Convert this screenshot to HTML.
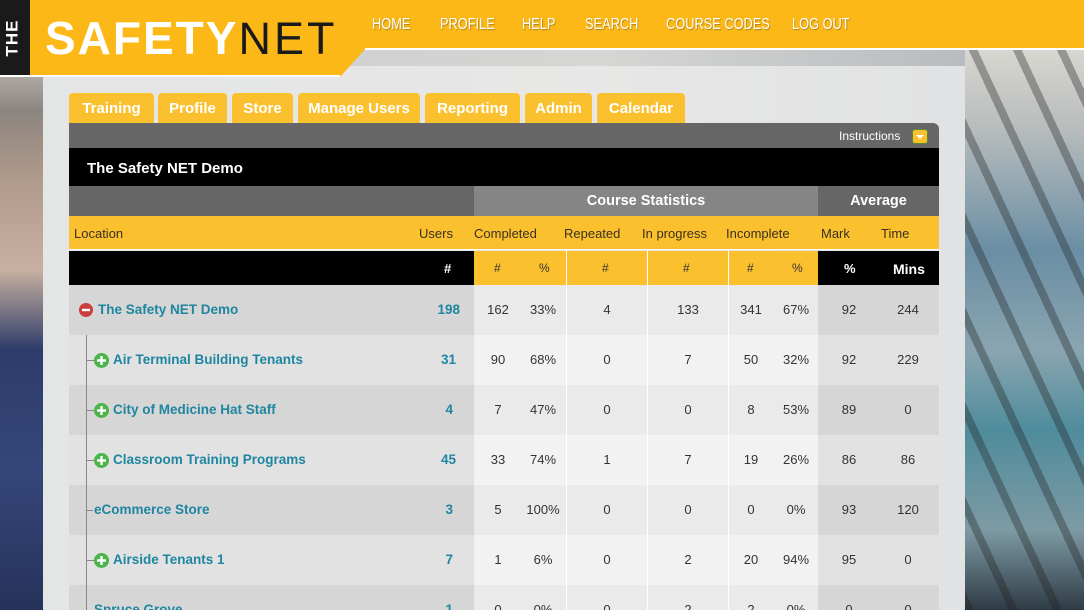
<!DOCTYPE html>
<html><head><meta charset="utf-8">
<style>
*{margin:0;padding:0;box-sizing:border-box}
html,body{width:1084px;height:610px;overflow:hidden}
body{position:relative;font-family:"Liberation Sans","DejaVu Sans",sans-serif;
background:linear-gradient(90deg,#3a3f4a 0,#6b6f75 43px,#c9cbcc 43px,#d6d6d4 600px,#b8bcc0 965px,#5d6f7d 990px,#8fa8b5 1020px,#4a5c68 1084px);}
.lstrip{position:absolute;left:0;top:50px;width:43px;height:560px;background:linear-gradient(180deg,#c9c4bd 0,#8c8580 60px,#b09a8a 130px,#c8b0a0 220px,#2d3c6a 300px,#35467a 420px,#26325a 560px)}
.rstrip{position:absolute;left:965px;top:50px;width:119px;height:560px;background:
repeating-linear-gradient(65deg,rgba(30,30,30,.35) 0 8px,transparent 8px 40px),
linear-gradient(180deg,#d8d6d0 0,#b7bcbc 80px,#6a8ea4 200px,#8aa5b0 300px,#4f8c9c 380px,#7d9aa4 480px,#2f3b45 560px)}
.panel{position:absolute;left:43px;top:66px;width:922px;height:544px;background:rgba(235,235,235,.8)}
.hdr{position:absolute;left:0;top:0;width:1084px;height:50px;background:#fbb817;border-bottom:2px solid #fff}
.logo{position:absolute;left:0;top:0;width:365px;height:77px;background:#fbb817;clip-path:polygon(0 0,100% 0,100% 64%,340px 100%,0 100%)}
.logoline{position:absolute;left:0;top:75px;width:340px;height:2px;background:#fff}
.the{position:absolute;left:0;top:0;width:30px;height:75px;background:#1a1a1a}
.the span{position:absolute;left:-6px;top:28px;color:#fff;font-weight:bold;font-size:17px;transform:rotate(-90deg);letter-spacing:1px}
.brand{position:absolute;left:45px;top:10px;font-size:46px;line-height:56px;color:#fff;font-weight:bold;letter-spacing:2px;white-space:nowrap}
.brand b{font-weight:normal;color:#1a1a1a;letter-spacing:3px;font-size:45px}
.nav a{position:absolute;top:16px;color:#fff;font-size:16px;text-decoration:none;transform:scaleX(.8);transform-origin:left;white-space:nowrap;text-shadow:1px 1px 1px rgba(0,0,0,.3)}
.tab{position:absolute;top:93px;height:30px;background:#fbc02d;border-radius:4px 4px 0 0;color:#fff;font-weight:bold;font-size:15px;line-height:31px;text-align:center}
.abs{position:absolute}
.t{position:absolute;font-size:13px;color:#333}
.ctr{text-align:center}
.hl{position:absolute;left:86px;width:9px;height:1px;background:#888}.pl{position:absolute;left:94px}.nm{position:absolute;color:#1e86a0;font-weight:bold;font-size:13.5px}.u{position:absolute;color:#1e86a0;font-weight:bold;font-size:13.5px;width:40px;text-align:right;left:420px}.n{position:absolute;font-size:13px;color:#333;text-align:center;width:50px}
</style></head><body>
<div class="lstrip"></div><div class="rstrip"></div>
<div class="panel"></div>
<div class="hdr"></div>
<div class="logo"></div><div class="logoline"></div>
<div class="the"><span>THE</span></div>
<div class="brand">SAFETY<b>NET</b></div>
<div class="nav">
<a style="left:372px">HOME</a><a style="left:440px">PROFILE</a><a style="left:522px">HELP</a><a style="left:585px">SEARCH</a><a style="left:666px">COURSE CODES</a><a style="left:792px">LOG OUT</a>
</div>
<div class="tab" style="left:69px;width:85px">Training</div>
<div class="tab" style="left:158px;width:69px">Profile</div>
<div class="tab" style="left:232px;width:61px">Store</div>
<div class="tab" style="left:298px;width:122px">Manage Users</div>
<div class="tab" style="left:425px;width:95px">Reporting</div>
<div class="tab" style="left:525px;width:67px">Admin</div>
<div class="tab" style="left:597px;width:88px">Calendar</div>

<div class="abs" style="left:69px;top:123px;width:870px;height:25px;background:#666;border-radius:0 6px 0 0"></div>
<div class="t" style="left:839px;top:129px;color:#fff;font-size:12px">Instructions</div>
<div class="abs" style="left:912px;top:129px;width:16px;height:15px;background:#fbc02d;border:1px solid #5a8a3a;border-radius:3px"></div>
<div class="abs" style="left:916px;top:135px;width:0;height:0;border-left:4px solid transparent;border-right:4px solid transparent;border-top:4px solid #fff"></div>
<div class="abs" style="left:69px;top:148px;width:870px;height:38px;background:#000"></div>
<div class="t" style="left:87px;top:160px;color:#fff;font-weight:bold;font-size:15px">The Safety NET Demo</div>
<div class="abs" style="left:69px;top:186px;width:405px;height:30px;background:#666"></div>
<div class="abs" style="left:474px;top:186px;width:344px;height:30px;background:#858585"></div>
<div class="abs" style="left:818px;top:186px;width:121px;height:30px;background:#666"></div>
<div class="t ctr" style="left:474px;width:344px;top:193px;color:#fff;font-weight:bold;font-size:14.5px">Course Statistics</div>
<div class="t ctr" style="left:818px;width:121px;top:193px;color:#fff;font-weight:bold;font-size:14.5px">Average</div>
<div class="abs" style="left:69px;top:216px;width:870px;height:34px;background:#fbc02d;border-bottom:1px solid #fff"></div>
<div class="t" style="left:74px;top:226px;color:#3a3020">Location</div>
<div class="t" style="left:419px;top:226px;color:#3a3020">Users</div>
<div class="t" style="left:474px;top:226px;color:#3a3020">Completed</div>
<div class="t" style="left:564px;top:226px;color:#3a3020">Repeated</div>
<div class="t" style="left:642px;top:226px;color:#3a3020">In progress</div>
<div class="t" style="left:726px;top:226px;color:#3a3020">Incomplete</div>
<div class="t" style="left:821px;top:226px;color:#3a3020">Mark</div>
<div class="t" style="left:881px;top:226px;color:#3a3020">Time</div>
<div class="abs" style="left:69px;top:251px;width:405px;height:34px;background:#000"></div>
<div class="abs" style="left:474px;top:251px;width:344px;height:34px;background:#fbc02d"></div>
<div class="abs" style="left:818px;top:251px;width:121px;height:34px;background:#000"></div>
<div class="t" style="left:444px;top:261px;color:#fff;font-weight:bold">#</div>
<div class="t" style="left:494px;top:261px;font-size:12px">#</div><div class="t" style="left:539px;top:261px;font-size:12px">%</div>
<div class="t" style="left:602px;top:261px;font-size:12px">#</div>
<div class="t" style="left:683px;top:261px;font-size:12px">#</div>
<div class="t" style="left:747px;top:261px;font-size:12px">#</div><div class="t" style="left:792px;top:261px;font-size:12px">%</div>
<div class="t" style="left:844px;top:261px;color:#fff;font-weight:bold">%</div>
<div class="t" style="left:893px;top:261px;color:#fff;font-weight:bold;font-size:14px">Mins</div>

<div class="abs" style="left:69px;top:285px;width:870px;height:325px;overflow:hidden">
<div class="abs" style="left:0;top:0;width:405px;height:50px;background:#d6d6d6"></div><div class="abs" style="left:405px;top:0;width:344px;height:50px;background:#eaeaea"></div><div class="abs" style="left:749px;top:0;width:121px;height:50px;background:#d6d6d6"></div>
<div class="abs" style="left:0;top:50px;width:405px;height:50px;background:#e2e2e2"></div><div class="abs" style="left:405px;top:50px;width:344px;height:50px;background:#f2f2f2"></div><div class="abs" style="left:749px;top:50px;width:121px;height:50px;background:#e2e2e2"></div>
<div class="abs" style="left:0;top:100px;width:405px;height:50px;background:#d6d6d6"></div><div class="abs" style="left:405px;top:100px;width:344px;height:50px;background:#eaeaea"></div><div class="abs" style="left:749px;top:100px;width:121px;height:50px;background:#d6d6d6"></div>
<div class="abs" style="left:0;top:150px;width:405px;height:50px;background:#e2e2e2"></div><div class="abs" style="left:405px;top:150px;width:344px;height:50px;background:#f2f2f2"></div><div class="abs" style="left:749px;top:150px;width:121px;height:50px;background:#e2e2e2"></div>
<div class="abs" style="left:0;top:200px;width:405px;height:50px;background:#d6d6d6"></div><div class="abs" style="left:405px;top:200px;width:344px;height:50px;background:#eaeaea"></div><div class="abs" style="left:749px;top:200px;width:121px;height:50px;background:#d6d6d6"></div>
<div class="abs" style="left:0;top:250px;width:405px;height:50px;background:#e2e2e2"></div><div class="abs" style="left:405px;top:250px;width:344px;height:50px;background:#f2f2f2"></div><div class="abs" style="left:749px;top:250px;width:121px;height:50px;background:#e2e2e2"></div>
<div class="abs" style="left:0;top:300px;width:405px;height:25px;background:#d6d6d6"></div><div class="abs" style="left:405px;top:300px;width:344px;height:25px;background:#eaeaea"></div><div class="abs" style="left:749px;top:300px;width:121px;height:25px;background:#d6d6d6"></div>
<div class="abs" style="left:497px;top:0;width:1px;height:325px;background:#fff"></div>
<div class="abs" style="left:578px;top:0;width:1px;height:325px;background:#fff"></div>
<div class="abs" style="left:659px;top:0;width:1px;height:325px;background:#fff"></div>
<div class="abs" style="left:17px;top:50px;width:1px;height:275px;background:#888"></div>
</div>
<div class="abs" style="left:566px;top:251px;width:1px;height:34px;background:#fff"></div>
<div class="abs" style="left:647px;top:251px;width:1px;height:34px;background:#fff"></div>
<div class="abs" style="left:728px;top:251px;width:1px;height:34px;background:#fff"></div>

<svg class="abs" style="left:79px;top:303px" width="14" height="14"><circle cx="7" cy="7" r="7" fill="#c9403f"/><rect x="3" y="5.8" width="8" height="2.4" fill="#fff"/></svg>
<div class="t" style="left:98px;top:302px;color:#1e86a0;font-weight:bold;font-size:13.5px">The Safety NET Demo</div>

<div class="u" style="top:302px">198</div>
<div class="n" style="left:473px;top:302px">162</div><div class="n" style="left:518px;top:302px">33%</div><div class="n" style="left:582px;top:302px">4</div><div class="n" style="left:663px;top:302px">133</div><div class="n" style="left:726px;top:302px">341</div><div class="n" style="left:771px;top:302px">67%</div><div class="n" style="left:824px;top:302px">92</div><div class="n" style="left:883px;top:302px">244</div>

<div class="hl" style="top:360px"></div><svg class="pl" style="top:353px" width="15" height="15"><circle cx="7.5" cy="7.5" r="7.5" fill="#4ab54a"/><rect x="3" y="6.3" width="9" height="2.4" fill="#fff"/><rect x="6.3" y="3" width="2.4" height="9" fill="#fff"/></svg>
<div class="nm" style="left:113px;top:352px">Air Terminal Building Tenants</div><div class="u" style="top:352px;left:416px">31</div>
<div class="n" style="left:473px;top:352px">90</div><div class="n" style="left:518px;top:352px">68%</div><div class="n" style="left:582px;top:352px">0</div><div class="n" style="left:663px;top:352px">7</div><div class="n" style="left:726px;top:352px">50</div><div class="n" style="left:771px;top:352px">32%</div><div class="n" style="left:824px;top:352px">92</div><div class="n" style="left:883px;top:352px">229</div>

<div class="hl" style="top:410px"></div><svg class="pl" style="top:403px" width="15" height="15"><circle cx="7.5" cy="7.5" r="7.5" fill="#4ab54a"/><rect x="3" y="6.3" width="9" height="2.4" fill="#fff"/><rect x="6.3" y="3" width="2.4" height="9" fill="#fff"/></svg>
<div class="nm" style="left:113px;top:402px">City of Medicine Hat Staff</div><div class="u" style="top:402px;left:413px">4</div>
<div class="n" style="left:473px;top:402px">7</div><div class="n" style="left:518px;top:402px">47%</div><div class="n" style="left:582px;top:402px">0</div><div class="n" style="left:663px;top:402px">0</div><div class="n" style="left:726px;top:402px">8</div><div class="n" style="left:771px;top:402px">53%</div><div class="n" style="left:824px;top:402px">89</div><div class="n" style="left:883px;top:402px">0</div>

<div class="hl" style="top:460px"></div><svg class="pl" style="top:453px" width="15" height="15"><circle cx="7.5" cy="7.5" r="7.5" fill="#4ab54a"/><rect x="3" y="6.3" width="9" height="2.4" fill="#fff"/><rect x="6.3" y="3" width="2.4" height="9" fill="#fff"/></svg>
<div class="nm" style="left:113px;top:452px">Classroom Training Programs</div><div class="u" style="top:452px;left:416px">45</div>
<div class="n" style="left:473px;top:452px">33</div><div class="n" style="left:518px;top:452px">74%</div><div class="n" style="left:582px;top:452px">1</div><div class="n" style="left:663px;top:452px">7</div><div class="n" style="left:726px;top:452px">19</div><div class="n" style="left:771px;top:452px">26%</div><div class="n" style="left:824px;top:452px">86</div><div class="n" style="left:883px;top:452px">86</div>

<div class="hl" style="top:510px;width:7px"></div>
<div class="nm" style="left:94px;top:502px">eCommerce Store</div><div class="u" style="top:502px;left:413px">3</div>
<div class="n" style="left:473px;top:502px">5</div><div class="n" style="left:518px;top:502px">100%</div><div class="n" style="left:582px;top:502px">0</div><div class="n" style="left:663px;top:502px">0</div><div class="n" style="left:726px;top:502px">0</div><div class="n" style="left:771px;top:502px">0%</div><div class="n" style="left:824px;top:502px">93</div><div class="n" style="left:883px;top:502px">120</div>

<div class="hl" style="top:560px"></div><svg class="pl" style="top:553px" width="15" height="15"><circle cx="7.5" cy="7.5" r="7.5" fill="#4ab54a"/><rect x="3" y="6.3" width="9" height="2.4" fill="#fff"/><rect x="6.3" y="3" width="2.4" height="9" fill="#fff"/></svg>
<div class="nm" style="left:113px;top:552px">Airside Tenants 1</div><div class="u" style="top:552px;left:413px">7</div>
<div class="n" style="left:473px;top:552px">1</div><div class="n" style="left:518px;top:552px">6%</div><div class="n" style="left:582px;top:552px">0</div><div class="n" style="left:663px;top:552px">2</div><div class="n" style="left:726px;top:552px">20</div><div class="n" style="left:771px;top:552px">94%</div><div class="n" style="left:824px;top:552px">95</div><div class="n" style="left:883px;top:552px">0</div>

<div class="nm" style="left:94px;top:602px">Spruce Grove</div><div class="u" style="top:602px;left:413px">1</div>
<div class="n" style="left:473px;top:602px">0</div><div class="n" style="left:518px;top:602px">0%</div><div class="n" style="left:582px;top:602px">0</div><div class="n" style="left:663px;top:602px">2</div><div class="n" style="left:726px;top:602px">2</div><div class="n" style="left:771px;top:602px">0%</div><div class="n" style="left:824px;top:602px">0</div><div class="n" style="left:883px;top:602px">0</div>
</body></html>
